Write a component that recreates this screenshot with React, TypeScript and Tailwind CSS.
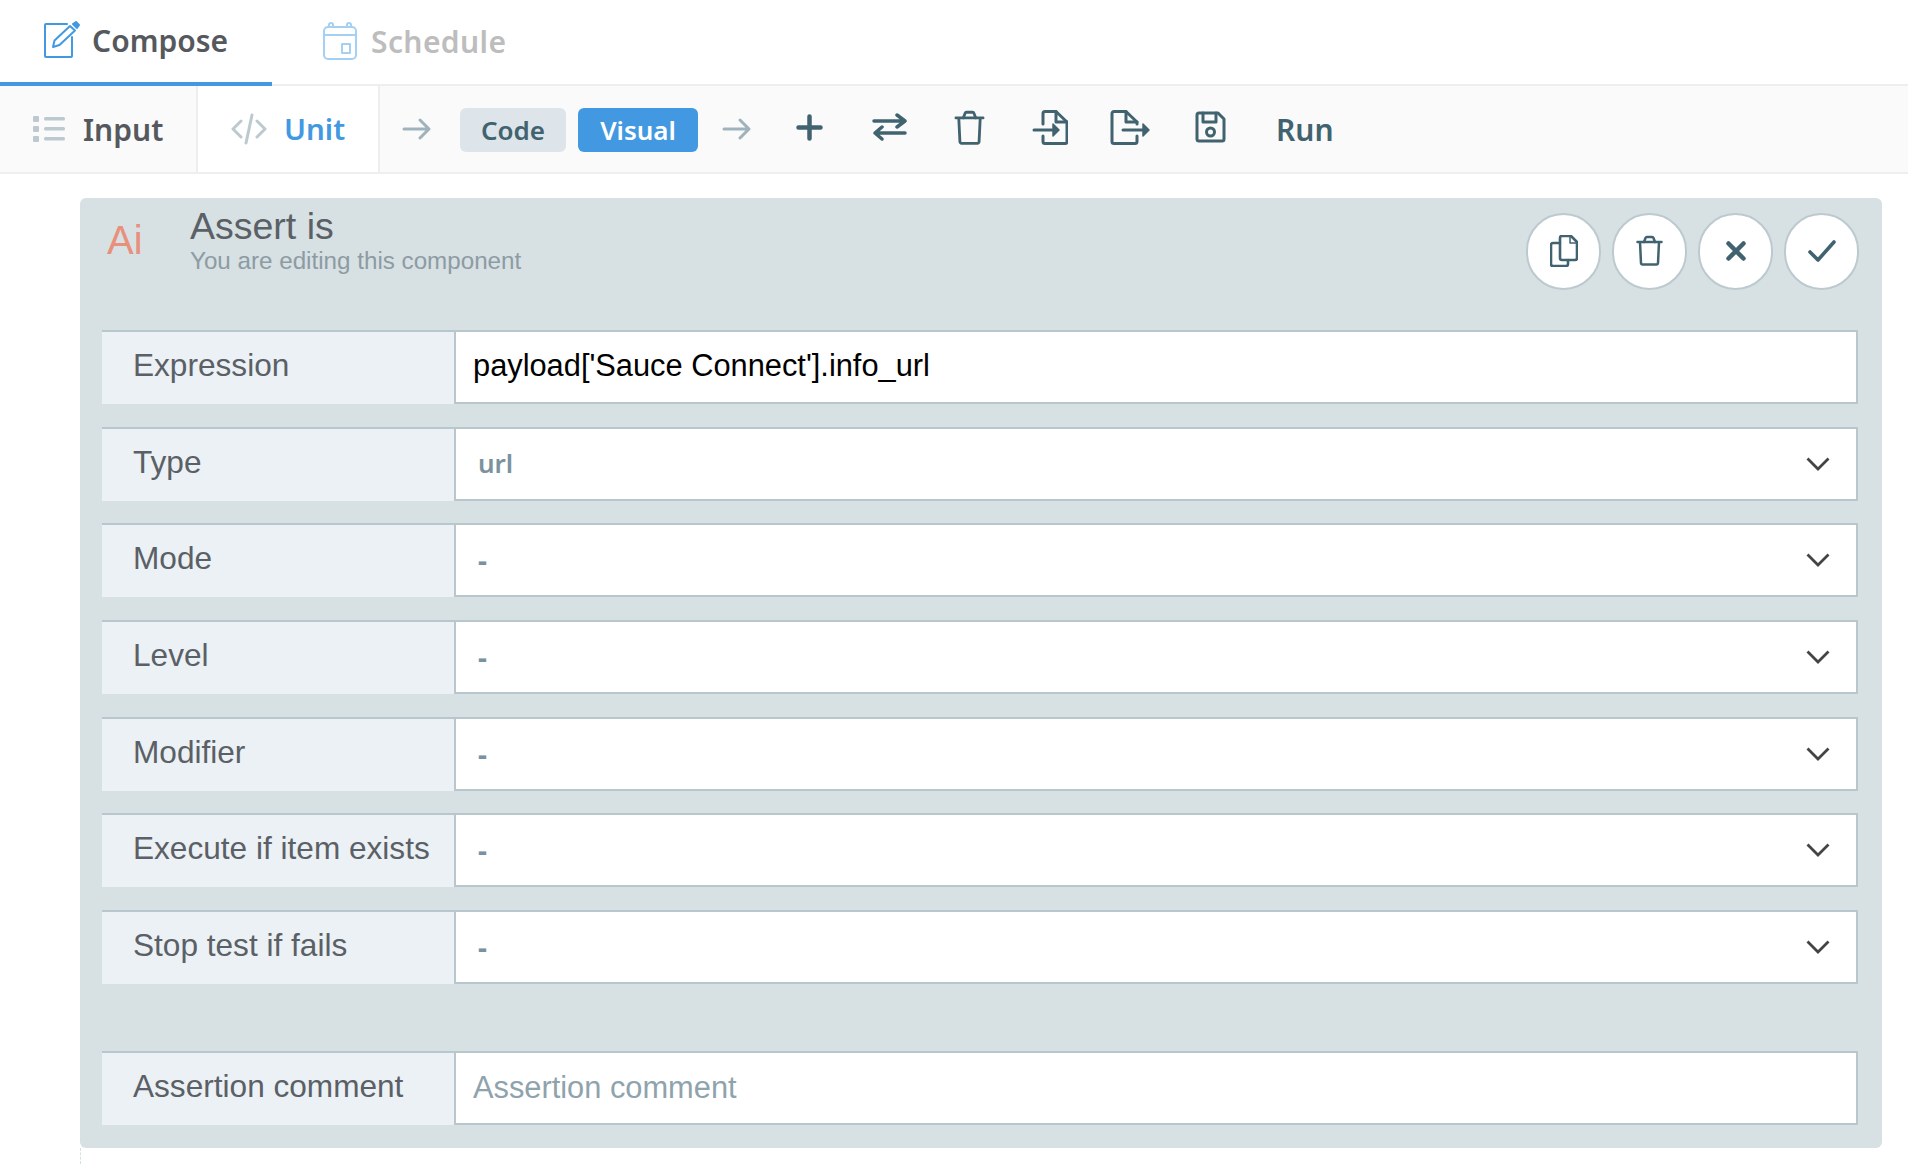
import type { ReactNode } from 'react';

const HEAD = "font-['Noto_Sans',sans-serif]";
const BODY = "font-['Liberation_Sans',Arial,sans-serif]";

const Icon = ({ w, h, sw = 3, className, children }: { w: number; h: number; sw?: number; className?: string; children: ReactNode }) => (
  <svg
    width={w}
    height={h}
    viewBox={`0 0 ${w} ${h}`}
    fill="none"
    stroke="currentColor"
    strokeWidth={sw}
    strokeLinecap="round"
    strokeLinejoin="round"
    className={`shrink-0 ${className ?? ''}`}
  >
    {children}
  </svg>
);

const ComposeIcon = () => (
  <Icon w={36} h={38} sw={2} className="text-[#4299e1]">
    <path d="M23 3H2a1 1 0 0 0-1 1v31a1 1 0 0 0 1 1h25a1 1 0 0 0 1-1V16" />
    <path d="M9 26l1.500-6.500L26 5l5 4.500L15.500 24z" />
    <path d="M29 3l3-2 3 3-2 3z" fill="currentColor" />
  </Icon>
);

const ScheduleIcon = () => (
  <Icon w={34} h={38} sw={2} className="text-[#a4d0f4]">
    <rect x="1" y="5" width="32" height="32" rx="4" />
    <path d="M1 13h32" />
    <path d="M6 5V3a2 2 0 0 1 4 0v2M24 5V3a2 2 0 0 1 4 0v2" />
    <rect x="19" y="22" width="8" height="9" />
  </Icon>
);

const TrashIcon = ({ w, h }: { w: number; h: number }) => (
  <svg width={w} height={h} viewBox="0 0 27 31" fill="none" stroke="currentColor" strokeWidth="2.500" strokeLinecap="round" strokeLinejoin="round" className="shrink-0">
    <path d="M1.500 7h24M4 7l1 21a1.500 1.500 0 0 0 1.500 1.500h14A1.500 1.500 0 0 0 22 28l1-21" />
    <path d="M8 7l1.500-4a1.500 1.500 0 0 1 1.500-1h5a1.500 1.500 0 0 1 1.500 1L19 7" />
  </svg>
);

const Arrow = ({ className }: { className: string }) => (
  <Icon w={30} h={24} className={`text-[#9fb3bd] ${className}`}>
    <path d="M2 12h25M18 3l9 9-9 9" />
  </Icon>
);

const Chevron = () => (
  <svg width="24" height="14" viewBox="0 0 24 14" fill="none" stroke="#444" strokeWidth="2.800" className="shrink-0">
    <path d="M1.500 1.500L12 12 22.500 1.500" />
  </svg>
);

const selects = [
  { label: 'Type', value: 'url' },
  { label: 'Mode', value: '-' },
  { label: 'Level', value: '-' },
  { label: 'Modifier', value: '-' },
  { label: 'Execute if item exists', value: '-' },
  { label: 'Stop test if fails', value: '-' },
];

const Row = ({ label, children }: { label: string; children: ReactNode }) => (
  <div className={`flex h-[74px] ${BODY}`}>
    <div className="w-[352px] shrink-0 border-t-2 border-[#b8c6cd] bg-[#ecf1f5] pl-[31px] pt-[15px] text-[31.600px] leading-[36px] text-[#5a6066]">
      {label}
    </div>
    <div className="flex flex-1 items-center border-2 border-[#b8c6cd] bg-white">{children}</div>
  </div>
);

const RoundButton = ({ children }: { children: ReactNode }) => (
  <button className="flex h-[77px] w-[75px] items-center justify-center rounded-full border-2 border-[#bccad0] bg-white pb-[2px] text-[#41636f]">
    {children}
  </button>
);

export default function App() {
  return (
    <div className="min-h-[1166px] bg-white">
      <div className={`flex h-[86px] border-b-2 border-[#eeeeee] ${HEAD}`}>
        <div className="flex h-[86px] w-[272px] items-center gap-[12px] border-b-4 border-[#4299e1] pl-[44px] pb-[2px]">
          <ComposeIcon />
          <span className="text-[30px] font-semibold text-[#55585c]">Compose</span>
        </div>
        <div className="flex items-center gap-[14px] pl-[51px] pb-[2px]">
          <ScheduleIcon />
          <span className="text-[30px] font-semibold tracking-[0.4px] text-[#bdbdbd]">Schedule</span>
        </div>
      </div>

      <div className={`flex h-[88px] border-b-2 border-[#eeeeee] bg-[#fafafa] ${HEAD}`}>
        <div className="flex w-[198px] items-center border-r-2 border-[#eeeeee] pl-[33px]">
          <svg width="32" height="26" viewBox="0 0 32 26" className="text-[#bccad0]" fill="currentColor">
            <rect x="0" y="0" width="6" height="6" rx="1" />
            <rect x="0" y="10" width="6" height="6" rx="1" />
            <rect x="0" y="20" width="6" height="6" rx="1" />
            <rect x="11" y="1" width="21" height="3.500" rx="1.500" />
            <rect x="11" y="11" width="21" height="3.500" rx="1.500" />
            <rect x="11" y="21" width="21" height="3.500" rx="1.500" />
          </svg>
          <span className="ml-[18px] text-[30px] font-semibold text-[#55585c]">Input</span>
        </div>
        <div className="flex w-[182px] items-center border-r-2 border-[#eeeeee] bg-white pl-[33px]">
          <Icon w={36} h={32} className="text-[#bccad0]">
            <path d="M10 8l-8 8 8 8M26 8l8 8-8 8M21 2l-6 28" />
          </Icon>
          <span className="ml-[17px] text-[29.500px] font-semibold text-[#4299e1]">Unit</span>
        </div>
        <div className="flex flex-1 items-center text-[#41636f]">
          <Arrow className="ml-[22px]" />
          <button className="ml-[28px] mt-[2px] flex h-[44px] w-[106px] items-center justify-center rounded-[6px] bg-[#dde5ea] text-[26px] font-semibold text-[#41636f]">
            Code
          </button>
          <button className="ml-[12px] mt-[2px] flex h-[44px] w-[120px] items-center justify-center rounded-[6px] bg-[#4299e1] text-[26px] font-semibold text-white">
            Visual
          </button>
          <Arrow className="ml-[24px]" />
          <div className="ml-[44px] flex items-center pb-[4px]">
            <Icon w={27} h={27} sw={4.500}>
              <path d="M13.500 2.500v22M2.500 13.500h22" />
            </Icon>
            <Icon w={35} h={28} sw={3.500} className="ml-[49px]">
              <path d="M2 8h31M25 2l8 6-8 6M33 20H3M10 14l-7 6 7 6" />
            </Icon>
            <span className="ml-[47px]">
              <TrashIcon w={31} h={35} />
            </span>
            <Icon w={36} h={35} className="ml-[47px]">
              <path d="M11 14V3.500a2 2 0 0 1 2-2h11L35 12v19.500a2 2 0 0 1-2 2H13a2 2 0 0 1-2-2V26" />
              <path d="M24 1.500V12h11M2 20h18" />
              <path d="M21 14l6 6-6 6z" fill="currentColor" strokeWidth="1.500" />
            </Icon>
            <Icon w={40} h={35} className="ml-[42px]">
              <path d="M27 14v-2L16 1.500H4a2 2 0 0 0-2 2v28a2 2 0 0 0 2 2h21a2 2 0 0 0 2-2V26" />
              <path d="M16 1.500V12h11M13 20h20" />
              <path d="M33 14l6 6-6 6z" fill="currentColor" strokeWidth="1.500" />
            </Icon>
            <Icon w={31} h={32} className="ml-[45px]">
              <path d="M2 4a2 2 0 0 1 2-2h19l6 6v20a2 2 0 0 1-2 2H4a2 2 0 0 1-2-2z" />
              <path d="M8 2v9h13V2" />
              <circle cx="15.500" cy="21" r="4" />
            </Icon>
          </div>
          <span className="ml-[50px] text-[30px] font-semibold text-[#41636f]">Run</span>
        </div>
      </div>

      <div className="ml-[80px] mt-[24px] h-[950px] w-[1802px] rounded-[6px] bg-[#d7e0e3] pl-[22px] pr-[24px]">
        <div className={`flex h-[132px] ${BODY}`}>
          <span className="mt-[17px] w-[88px] pl-[5px] text-[40px] leading-[50px] text-[#e8907c]">Ai</span>
          <div className="flex-1 pt-[7px]">
            <div className="text-[37.500px] leading-[42px] text-[#5a6066]">Assert is</div>
            <div className="text-[24.200px] leading-[28px] text-[#8d9ba3]">You are editing this component</div>
          </div>
          <div className="mr-[-1px] mt-[15px] flex gap-[11px]">
            <RoundButton>
              <Icon w={28} h={32} sw={2.600}>
                <path d="M10 8H3a2 2 0 0 0-2 2v19a2 2 0 0 0 2 2h13a2 2 0 0 0 2-2v-4" />
                <path d="M10 3a2 2 0 0 1 2-2h9l6 6v16a2 2 0 0 1-2 2H12a2 2 0 0 1-2-2z" />
                <path d="M20 1v7h7" strokeWidth="1.500" />
              </Icon>
            </RoundButton>
            <RoundButton>
              <TrashIcon w={27} h={31} />
            </RoundButton>
            <RoundButton>
              <Icon w={20} h={20} sw={4.500}>
                <path d="M2.500 2.500l15 15M17.500 2.500l-15 15" />
              </Icon>
            </RoundButton>
            <RoundButton>
              <Icon w={28} h={22} sw={3.600}>
                <path d="M2 12l8 8L26 2" />
              </Icon>
            </RoundButton>
          </div>
        </div>

        <div className="flex flex-col gap-[22.670px]">
          <Row label="Expression">
            <span className="pb-[2px] pl-[17px] text-[30.800px] text-black">payload['Sauce Connect'].info_url</span>
          </Row>
          {selects.map((s) => (
            <Row key={s.label} label={s.label}>
              <span className={`flex-1 pl-[22px] text-[#7b929e] ${s.value === '-' ? 'text-[28px] font-bold' : 'text-[26px] font-semibold'} ${HEAD}`}>
                {s.value}
              </span>
              <span className="mr-[26px]">
                <Chevron />
              </span>
            </Row>
          ))}
        </div>

        <div className="mt-[67px]">
          <Row label="Assertion comment">
            <span className="pl-[17px] text-[30.800px] text-[#8fa3ad]">Assertion comment</span>
          </Row>
        </div>
      </div>
      <div className="ml-[80px] h-[16px] border-l border-dashed border-[#d7e0e3]" />
    </div>
  );
}
